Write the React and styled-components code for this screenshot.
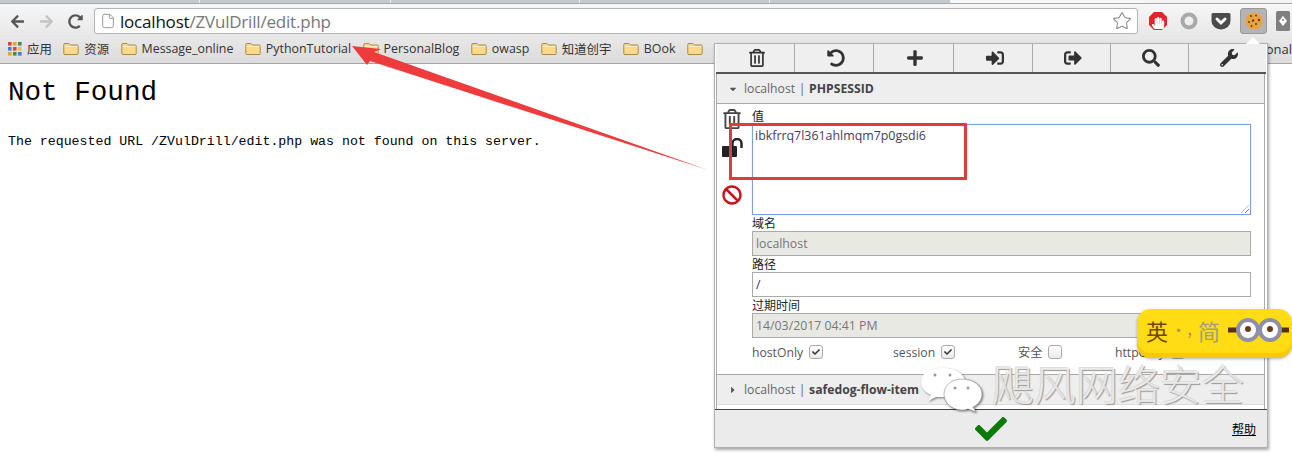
import React from "react";
import styled, { createGlobalStyle } from "styled-components";
import {
  FaArrowLeft, FaArrowRight, FaRedoAlt, FaRegTrashAlt, FaUndoAlt, FaPlus, FaSignInAlt,
  FaSignOutAlt, FaSearch, FaWrench, FaBan, FaCheck, FaHandPaper, FaCaretDown, FaCaretRight,
} from "react-icons/fa";
import { File, Star } from "lucide-react";

const Global = createGlobalStyle`
  html, body { margin: 0; padding: 0; background: #fff; }
  * { box-sizing: border-box; }
`;

const UI = `"Open Sans", "Noto Sans CJK SC", sans-serif`;

const Screen = styled.div`
  position: relative;
  width: 1292px;
  height: 453px;
  overflow: hidden;
  background: #fff;
  font-family: ${UI};
`;

const TabStrip = styled.div`
  display: flex;
  height: 4px;
  background: #f3f3f3;
  border-bottom: 1px solid #a8a8a8;
`;
const Tab = styled.div`
  width: ${(p) => p.$w}px;
  height: 3px;
  background: ${(p) => (p.$on ? "#f6f6f6" : "#c5c8cc")};
  border-right: 1px solid #f2f2f2;
`;

const Toolbar = styled.div`
  display: flex;
  align-items: center;
  height: 32px;
  padding: 0 0 0 10px;
  background: linear-gradient(#f6f6f6, #e8e8e8);
`;
const NavButton = styled.span`
  display: flex;
  width: 16px;
  margin-top: 2px;
  margin-right: ${(p) => p.$mr}px;
  color: ${(p) => p.$c};
  font-size: 15px;
`;
const UrlBar = styled.div`
  display: flex;
  align-items: center;
  width: 1044px;
  height: 26px;
  padding: 0 5px 0 5px;
  margin-left: 10px;
  margin-top: 2px;
  background: #fff;
  border: 1px solid #b4b4b4;
  border-radius: 3px;
  font-size: 17px;
  letter-spacing: -0.2px;
`;
const Host = styled.span`
  color: #111;
  margin-left: 4px;
`;
const UrlPath = styled.span`
  color: #777;
  flex: 1;
`;
const Extensions = styled.div`
  display: flex;
  align-items: center;
  margin-top: 2px;
  margin-left: 10px;
`;
const ExtIcon = styled.span`
  display: flex;
  align-items: center;
  justify-content: center;
  width: ${(p) => p.$w}px;
  height: 26px;
  margin-left: ${(p) => p.$ml || 0}px;
  border-radius: 3px;
  background: ${(p) => (p.$on ? "#b4b4b4" : "transparent")};
  border: ${(p) => (p.$on ? "1px solid #999" : "none")};
`;

const BookmarkBar = styled.div`
  display: flex;
  align-items: center;
  height: 28px;
  padding: 0 0 2px 8px;
  background: linear-gradient(#e8e8e8, #dcdcdc);
  border-bottom: 1px solid #a4a4a4;
  overflow: hidden;
  font-size: 12.4px;
  color: #333;
  white-space: nowrap;
`;
const Bookmark = styled.span`
  display: flex;
  align-items: center;
  gap: 5px;
  margin-right: 11.5px;
`;
const BookmarkEnd = styled.span`
  margin-left: auto;
  font-size: 13px;
`;

const Page = styled.main`
  padding: 8px;
  font-family: "Liberation Mono", monospace;
  color: #000;
`;
const Heading = styled.h1`
  margin: 5px 0 0;
  font-size: 27.6px;
  line-height: 32px;
  font-weight: 400;
`;
const Para = styled.p`
  margin: 24px 0 0;
  font-size: 13.25px;
  line-height: 18px;
`;

const Popup = styled.section`
  position: absolute;
  left: 714px;
  top: 43px;
  width: 554px;
  height: 405px;
  padding: 1px 1px 0 1px;
  display: flex;
  flex-direction: column;
  background: #fff;
  border: 1px solid #b0b0b0;
  box-shadow: 1px 2px 3px rgba(0, 0, 0, 0.35);
  font-family: ${UI};
  &::before {
    content: "";
    position: absolute;
    right: 7px;
    top: -7px;
    border-left: 7px solid transparent;
    border-right: 7px solid transparent;
    border-bottom: 7px solid #fff;
  }
`;
const ActionBar = styled.div`
  display: grid;
  grid-template-columns: 79px 79px 80px 79px 78px 78px 1fr;
  height: 30px;
  margin-top: -1px;
  background: #efefef;
  border-bottom: 2px solid #555;
`;
const ActionCell = styled.span`
  display: flex;
  align-items: center;
  justify-content: center;
  padding-left: 3px;
  font-size: 18px;
  color: #333;
  border-right: ${(p) => (p.$last ? "none" : "1px solid #aaa")};
`;
const Accordion = styled.div`
  flex: 1;
  margin-right: 1px;
  border-left: 1px solid #aaa;
  border-right: 1px solid #aaa;
  display: flex;
  flex-direction: column;
`;
const CookieHeader = styled.div`
  display: flex;
  align-items: center;
  height: ${(p) => p.$h}px;
  padding-left: 11px;
  gap: 6px;
  background: #eee;
  font-size: 12.2px;
  color: #666;
  border-bottom: 1px solid ${(p) => p.$line};
  border-top: ${(p) => (p.$top ? "1px solid #aaa" : "none")};
`;
const Caret = styled.span`
  display: flex;
  width: 10px;
  color: #555;
  font-size: 10px;
`;
const CookieHost = styled.span`
  word-spacing: 0.5px;
`;
const CookieName = styled.b`
  color: #444;
  font-weight: 700;
`;
const CookieBody = styled.div`
  display: flex;
  height: 270px;
  padding: 5px 13px 0 5px;
`;
const SideIcons = styled.div`
  width: 30px;
  display: flex;
  flex-direction: column;
`;
const SideIcon = styled.span`
  display: flex;
  height: 20px;
  margin-top: ${(p) => p.$mt}px;
  font-size: ${(p) => p.$s}px;
  color: ${(p) => p.$c};
`;
const Fields = styled.div`
  flex: 1;
  display: flex;
  flex-direction: column;
`;
const FieldLabel = styled.label`
  display: block;
  height: ${(p) => p.$h || 16}px;
  font-size: 12px;
  line-height: ${(p) => p.$lh || 17}px;
  color: #222;
`;
const TextArea = styled.div`
  position: relative;
  height: 91px;
  padding: 3px 2px;
  font-size: 12.4px;
  line-height: 15px;
  color: #4a3a5a;
  background: #fff;
  border: 1px solid #7f9fdc;
  box-shadow: 0 0 1px #a8bfe8;
  &::after {
    content: "";
    position: absolute;
    right: 1px;
    bottom: 1px;
    width: 8px;
    height: 8px;
    background: repeating-linear-gradient(135deg, transparent 0 2px, #777 2px 3px);
    clip-path: polygon(100% 0, 100% 100%, 0 100%);
  }
`;
const Input = styled.div`
  height: 25px;
  padding: 0 3px;
  display: flex;
  align-items: center;
  font-size: 12.3px;
  color: ${(p) => (p.$off ? "#777" : "#333")};
  background: ${(p) => (p.$off ? "#e9e9e3" : "#fff")};
  border: 1px solid #aaa;
`;
const Flags = styled.div`
  display: grid;
  grid-template-columns: 141px 125px 97px 1fr;
  align-items: center;
  height: 16px;
  margin-top: 5px;
`;
const Flag = styled.span`
  display: flex;
  align-items: center;
  gap: 6px;
  font-size: 12.2px;
  color: #555;
`;
const Box = styled.span`
  display: flex;
  align-items: center;
  justify-content: center;
  width: 14px;
  height: 14px;
  border: 1px solid #aaa;
  border-radius: 3px;
  background: linear-gradient(#fff, #eaeaea);
  color: #333;
  font-size: 8px;
`;
const Gap = styled.div`
  height: 4px;
  background: #fff;
`;
const PopupFooter = styled.footer`
  position: relative;
  display: flex;
  align-items: center;
  justify-content: center;
  height: 38px;
  margin: 0 -1px;
  padding: 0 1px 0 0;
  background: #ebebeb;
  border-top: 1px solid #444;
  color: #0a7a0a;
  font-size: 32px;
`;
const Help = styled.a`
  position: absolute;
  right: 11px;
  top: 12px;
  font-size: 12px;
  line-height: 16px;
  color: #000;
  text-decoration: underline;
`;

const RedBox = styled.div`
  position: absolute;
  left: 729px;
  top: 123px;
  width: 238px;
  height: 57px;
  border: 3px solid #e03c3c;
`;
const Overlay = styled.svg`
  position: absolute;
  left: 0;
  top: 0;
  pointer-events: none;
`;
const Watermark = styled.div`
  position: absolute;
  left: 992px;
  top: 357px;
  font-size: 42px;
  line-height: 56px;
  font-weight: 300;
  white-space: nowrap;
  color: rgba(240, 240, 240, 0.85);
  text-shadow: 1px 1px 1px #999, -1px -1px 0 #ddd;
`;
const Bubbles = styled.svg`
  position: absolute;
  left: 918px;
  top: 364px;
  filter: drop-shadow(1px 1px 1px rgba(0, 0, 0, 0.5));
`;
const Ime = styled.div`
  position: absolute;
  left: 1137px;
  top: 309px;
  width: 155px;
  height: 49px;
  padding: 0 0 8px 9px;
  display: flex;
  align-items: center;
  border-radius: 14px;
  background: #ffdc14;
  box-shadow: inset 0 -5px 0 #f7c90c, 0 1px 3px rgba(0, 0, 0, 0.3);
  font-family: "Noto Sans CJK SC", sans-serif;
`;
const ImeLang = styled.span`
  font-size: 22px;
  line-height: 1;
  color: #6f4700;
`;
const ImePunct = styled.span`
  width: 30px;
  padding-left: 3px;
  font-size: 15px;
  color: #a8955a;
`;
const ImeMode = styled.span`
  font-size: 22px;
  line-height: 1;
  color: #a39f7c;
`;
const Eyes = styled.svg`
  margin-left: 8px;
`;

const Folder = () => (
  <svg width="16" height="14" viewBox="0 0 16 14">
    <path d="M2 1.500h4l1.500 1.500H14a1.200 1.200 0 0 1 1.200 1.200V11.300A1.200 1.200 0 0 1 14 12.500H2A1.200 1.200 0 0 1 .8 11.300V2.700A1.200 1.200 0 0 1 2 1.500z" fill="#fbd98a" stroke="#a98a48" />
    <path d="M1.500 4.500h13" stroke="#fff0c4" />
  </svg>
);

const Apps = () => {
  const colors = ["#d9453a", "#e8a33c", "#3f8f4c", "#3f7fd9", "#d9453a", "#e8c13c", "#e8a33c", "#3f8f4c", "#3f7fd9"];
  return (
    <svg width="14" height="14" viewBox="0 0 14 14">
      {colors.map((c, i) => (
        <rect key={i} x={(i % 3) * 5} y={Math.floor(i / 3) * 5} width="3.6" height="3.6" fill={c} />
      ))}
    </svg>
  );
};

const LockIcon = () => (
  <svg width="22" height="20" viewBox="0 0 22 20">
    <rect x="0" y="8" width="15" height="11" rx="1" fill="#222" />
    <path d="M10.500 9V5.500a4.500 4.500 0 0 1 9 0V10" fill="none" stroke="#222" strokeWidth="2.400" />
  </svg>
);
const BlockIcon = () => (
  <svg width="20" height="20" viewBox="0 0 20 20">
    <polygon points="6,1 14,1 19,6 19,14 14,19 6,19 1,14 1,6" fill="#e0262c" />
    <foreignObject x="3" y="3" width="14" height="15">
      <FaHandPaper color="#fff" size={14} />
    </foreignObject>
  </svg>
);
const RingIcon = () => (
  <svg width="20" height="20" viewBox="0 0 20 20">
    <circle cx="10" cy="10" r="6.500" fill="none" stroke="#a9a9a9" strokeWidth="4" />
  </svg>
);
const PocketIcon = () => (
  <svg width="20" height="18" viewBox="0 0 20 18">
    <path d="M2 1h16a1.500 1.500 0 0 1 1.500 1.500V9a9 8 0 0 1-19 0V2.500A1.500 1.500 0 0 1 2 1z" fill="#4b4b4b" />
    <path d="M6 7l4 4 4-4" fill="none" stroke="#fff" strokeWidth="3" strokeLinecap="round" />
  </svg>
);
const CookieIcon = () => (
  <svg width="18" height="18" viewBox="0 0 18 18">
    <circle cx="9" cy="9" r="8.500" fill="#e9a33f" />
    <g fill="#6b3d12">
      <circle cx="6" cy="4" r="1.100" /><circle cx="11" cy="3.500" r="1" /><circle cx="14" cy="8" r="1.200" />
      <circle cx="8" cy="8.500" r="1.200" /><circle cx="4" cy="10" r="1" /><circle cx="11" cy="12" r="1.100" /><circle cx="6.500" cy="14" r="1" />
    </g>
  </svg>
);
const TagIcon = () => (
  <svg width="14" height="20" viewBox="0 0 14 20">
    <rect width="14" height="20" y="0" rx="1.500" fill="#808080" />
    <path d="M7 5l4 5-4 5-4-5z" fill="#fff" />
    <circle cx="7" cy="9" r="1" fill="#808080" />
  </svg>
);

const actions = [FaRegTrashAlt, FaUndoAlt, FaPlus, FaSignInAlt, FaSignOutAlt, FaSearch, FaWrench];
const bookmarks = ["资源", "Message_online", "PythonTutorial", "PersonalBlog", "owasp", "知道创宇", "BOok", ""];

export default function App() {
  return (
    <Screen>
      <Global />
      <TabStrip>
        {[200, 191, 189, 190, 181].map((w, i) => <Tab key={i} $w={w} />)}
        <Tab $w={195} $on />
      </TabStrip>
      <Toolbar>
        <NavButton $mr={13} $c="#555"><FaArrowLeft /></NavButton>
        <NavButton $mr={13} $c="#c4c4c4"><FaArrowRight /></NavButton>
        <NavButton $mr={0} $c="#555"><FaRedoAlt /></NavButton>
        <UrlBar>
          <File size={16} color="#999" strokeWidth={1.5} />
          <Host>localhost</Host>
          <UrlPath>/ZVulDrill/edit.php</UrlPath>
          <Star size={20} color="#8a8a8a" strokeWidth={1.3} />
        </UrlBar>
        <Extensions>
          <ExtIcon $w={20}><BlockIcon /></ExtIcon>
          <ExtIcon $w={20} $ml={11}><RingIcon /></ExtIcon>
          <ExtIcon $w={20} $ml={12}><PocketIcon /></ExtIcon>
          <ExtIcon $w={27} $ml={9} $on><CookieIcon /></ExtIcon>
          <ExtIcon $w={14} $ml={9}><TagIcon /></ExtIcon>
        </Extensions>
      </Toolbar>
      <BookmarkBar>
        <Bookmark><Apps />应用</Bookmark>
        {bookmarks.map((b, i) => <Bookmark key={i}><Folder />{b}</Bookmark>)}
        <BookmarkEnd>Personal</BookmarkEnd>
      </BookmarkBar>
      <Page>
        <Heading>Not Found</Heading>
        <Para>The requested URL /ZVulDrill/edit.php was not found on this server.</Para>
      </Page>

      <Popup>
        <ActionBar>
          {actions.map((I, i) => <ActionCell key={i} $last={i === 6}><I /></ActionCell>)}
        </ActionBar>
        <Accordion>
          <CookieHeader $h={30} $line="#aaa">
            <Caret><FaCaretDown /></Caret>
            <CookieHost>localhost | <CookieName>PHPSESSID</CookieName></CookieHost>
          </CookieHeader>
          <CookieBody>
            <SideIcons>
              <SideIcon $mt={0} $s={20} $c="#444"><FaRegTrashAlt /></SideIcon>
              <SideIcon $mt={9} $s={20} $c="#222"><LockIcon /></SideIcon>
              <SideIcon $mt={27} $s={20} $c="#c8141c"><FaBan /></SideIcon>
            </SideIcons>
            <Fields>
              <FieldLabel $h={15} $lh={15}>值</FieldLabel>
              <TextArea>ibkfrrq7l361ahlmqm7p0gsdi6</TextArea>
              <FieldLabel>域名</FieldLabel>
              <Input $off>localhost</Input>
              <FieldLabel>路径</FieldLabel>
              <Input>/</Input>
              <FieldLabel>过期时间</FieldLabel>
              <Input $off>14/03/2017 04:41 PM</Input>
              <Flags>
                <Flag>hostOnly <Box><FaCheck /></Box></Flag>
                <Flag>session <Box><FaCheck /></Box></Flag>
                <Flag>安全 <Box /></Flag>
                <Flag>httpOnly <Box /></Flag>
              </Flags>
            </Fields>
          </CookieBody>
          <CookieHeader $h={31} $line="#ddd" $top>
            <Caret><FaCaretRight /></Caret>
            <CookieHost>localhost | <CookieName>safedog-flow-item</CookieName></CookieHost>
          </CookieHeader>
          <Gap />
        </Accordion>
        <PopupFooter>
          <FaCheck />
          <Help>帮助</Help>
        </PopupFooter>
      </Popup>

      <RedBox />
      <Overlay width="1292" height="453" viewBox="0 0 1292 453">
        <polygon points="352,46 381,49 374,52 708,170 370,61 367,65" fill="#ee3b3b" />
      </Overlay>
      <Bubbles width="70" height="52" viewBox="0 0 70 52">
        <path d="M3 18C3 9 12 4 24 4s23 5 23 14-9 15-22 15c-3 0-5 0-7 0l-8 4 3-6C7 28 3 24 3 18z" fill="#fff" />
        <path d="M26 30c0-9 8-15 18-15s20 6 20 15c0 6-4 11-9 13l3 5-8-3c-2 1-4 1-6 1-10 0-18-7-18-16z" fill="#fff" stroke="#888" strokeWidth=".6" />
        <g fill="#999">
          <circle cx="17" cy="11" r="1.500" /><circle cx="32" cy="11" r="1.500" />
          <circle cx="37" cy="24" r="1.500" /><circle cx="50" cy="24" r="1.500" />
        </g>
      </Bubbles>
      <Watermark>飓风网络安全</Watermark>
      <Ime>
        <ImeLang>英</ImeLang>
        <ImePunct>·，</ImePunct>
        <ImeMode>简</ImeMode>
        <Eyes width="64" height="34" viewBox="0 0 64 34">
          <rect x="0" y="14.500" width="61" height="5" fill="#5a2f0a" />
          <circle cx="20" cy="17" r="10" fill="#fff" stroke="#8f8fa8" strokeWidth="4" />
          <circle cx="42" cy="17" r="10" fill="#fff" stroke="#8f8fa8" strokeWidth="4" />
          <circle cx="20" cy="16" r="3" fill="#6a3a10" />
          <circle cx="42" cy="16" r="3" fill="#6a3a10" />
        </Eyes>
      </Ime>
    </Screen>
  );
}
